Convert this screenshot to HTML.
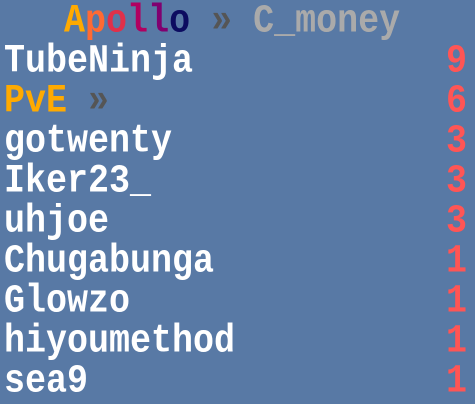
<!DOCTYPE html>
<html><head><meta charset="utf-8"><style>
html,body{margin:0;padding:0}
body{width:475px;height:402px;background:#5879a5;position:relative;overflow:hidden;font-family:"Liberation Mono",monospace;font-weight:bold;font-size:35px}
.l,.r{transform:scaleY(1.15);transform-origin:0 80%}
.l{position:absolute;left:4px;line-height:1;white-space:pre;color:#fff}
.r{position:absolute;right:8px;line-height:1;color:#ff5555}
</style></head><body>
<div class="l" style="left:64px;top:6px"><span style="color:#ffaa00">A</span><span style="color:#ff6a33">p</span><span style="color:#e0304a">o</span><span style="color:#b00060">l</span><span style="color:#800070">l</span><span style="color:#0c0c60">o</span> <span style="color:#555">»</span> <span style="color:#aaa">C_money</span></div>
<div class="l" style="top:46px">TubeNinja</div><div class="r" style="top:46px">9</div>
<div class="l" style="top:86px"><span style="color:#ffaa00">PvE</span> <span style="color:#555">»</span></div><div class="r" style="top:86px">6</div>
<div class="l" style="top:126px">gotwenty</div><div class="r" style="top:126px">3</div>
<div class="l" style="top:166px">Iker23_</div><div class="r" style="top:166px">3</div>
<div class="l" style="top:206px">uhjoe</div><div class="r" style="top:206px">3</div>
<div class="l" style="top:246px">Chugabunga</div><div class="r" style="top:246px">1</div>
<div class="l" style="top:286px">Glowzo</div><div class="r" style="top:286px">1</div>
<div class="l" style="top:326px">hiyoumethod</div><div class="r" style="top:326px">1</div>
<div class="l" style="top:366px">sea9</div><div class="r" style="top:366px">1</div>
</body></html>
